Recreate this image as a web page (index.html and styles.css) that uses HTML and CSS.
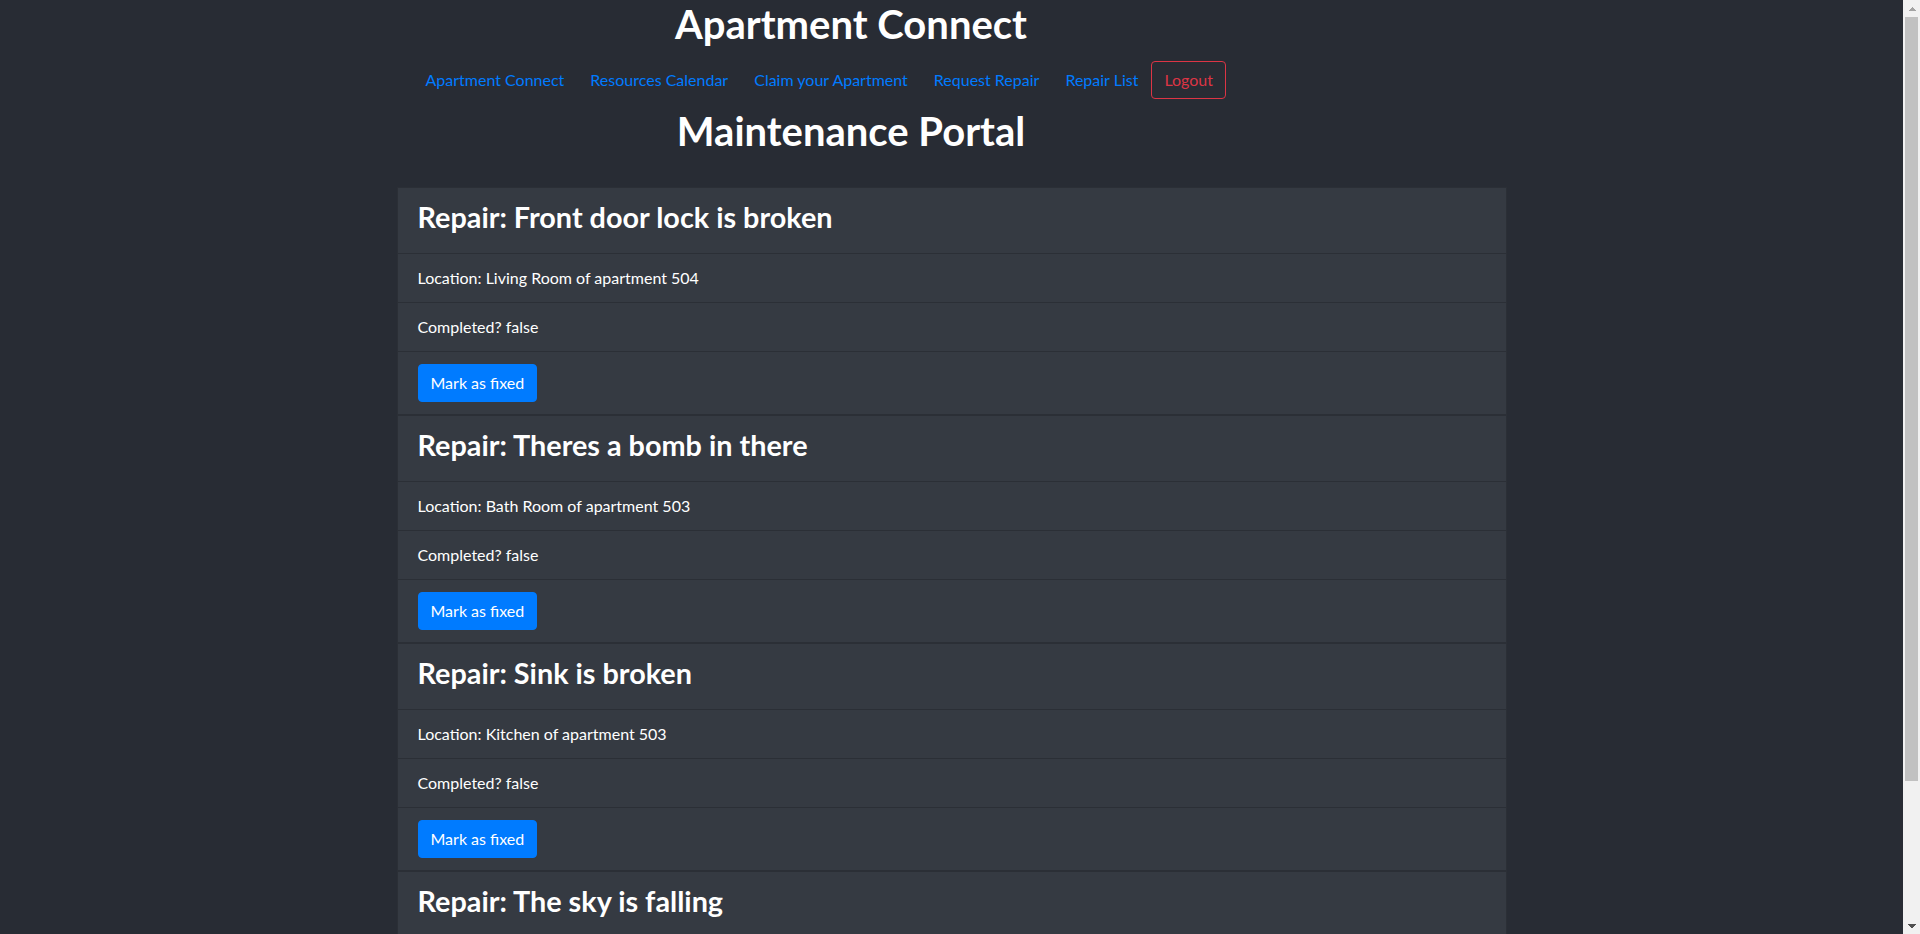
FILE: index.html
```html
<!DOCTYPE html>
<html lang="en">
<head>
<meta charset="utf-8">
<title>Apartment Connect</title>
<link rel="stylesheet" href="styles.css">
</head>
<body>
<div class="page">
  <div class="app">
    <header class="masthead">
      <h1 class="title">Apartment Connect</h1>
      <nav class="nav">
        <a class="nav-link" href="#">Apartment Connect</a>
        <a class="nav-link" href="#">Resources Calendar</a>
        <a class="nav-link" href="#">Claim your Apartment</a>
        <a class="nav-link" href="#">Request Repair</a>
        <a class="nav-link" href="#">Repair List</a>
        <button class="btn btn-outline-danger" type="button">Logout</button>
      </nav>
      <h1 class="title title-page">Maintenance Portal</h1>
    </header>

    <main class="repairs">
      <section class="card">
        <div class="item item-head"><h3>Repair: Front door lock is broken</h3></div>
        <div class="item">Location: Living Room of apartment 504</div>
        <div class="item">Completed? false</div>
        <div class="item item-action"><button class="btn btn-primary" type="button">Mark as fixed</button></div>
      </section>
      <section class="card">
        <div class="item item-head"><h3>Repair: Theres a bomb in there</h3></div>
        <div class="item">Location: Bath Room of apartment 503</div>
        <div class="item">Completed? false</div>
        <div class="item item-action"><button class="btn btn-primary" type="button">Mark as fixed</button></div>
      </section>
      <section class="card">
        <div class="item item-head"><h3>Repair: Sink is broken</h3></div>
        <div class="item">Location: Kitchen of apartment 503</div>
        <div class="item">Completed? false</div>
        <div class="item item-action"><button class="btn btn-primary" type="button">Mark as fixed</button></div>
      </section>
      <section class="card">
        <div class="item item-head"><h3>Repair: The sky is falling</h3></div>
        <div class="item">Location: Living Room of apartment 503</div>
        <div class="item">Completed? false</div>
        <div class="item item-action"><button class="btn btn-primary" type="button">Mark as fixed</button></div>
      </section>
    </main>
  </div>
</div>
<div class="scrollbar" aria-hidden="true">
  <div class="sb-btn sb-up"></div>
  <div class="sb-track"><div class="sb-thumb"></div></div>
  <div class="sb-btn sb-down"></div>
</div>
</body>
</html>
```

FILE: styles.css
```css
html, body {
  margin: 0;
  padding: 0;
}

body {
  display: flex;
  height: 100vh;
  overflow: hidden;
  background-color: #282c34;
  color: #ffffff;
  font-family: "Lato", "Liberation Sans", sans-serif;
  font-size: 16px;
  line-height: 1.5;
}

.page {
  flex: 1;
  min-width: 0;
  overflow: hidden;
}

/* static rendering of the browser's vertical scrollbar */
.scrollbar {
  width: 17px;
  flex: none;
  display: flex;
  flex-direction: column;
  background: #f1f1f1;
}
.sb-btn {
  height: 17px;
  flex: none;
  background-repeat: no-repeat;
  background-position: center;
  background-size: 8px 4px;
}
.sb-up {
  background-image: conic-gradient(from 135deg at 50% 0, #a3a3a3 90deg, transparent 0);
}
.sb-down {
  background-image: conic-gradient(from -45deg at 50% 100%, #505050 90deg, transparent 0);
}
.sb-track {
  flex: 1;
  padding: 0 2px;
}
.sb-thumb {
  height: 764px;
  background: #c1c1c1;
}

.app {
  width: 1110px;
  margin: 0 auto;
  padding: 0 15px;
}

.masthead {
  width: 909px;
}

.title {
  margin: 0 0 5px;
  font-size: 40px;
  font-weight: 700;
  line-height: 48px;
  text-align: center;
}

.title-page {
  margin-bottom: 32px;
}

.nav {
  display: flex;
  align-items: center;
  padding: 8px 0 8px 16px;
}

.nav-link {
  color: #007bff;
  text-decoration: none;
  padding: 0 13px;
  line-height: 24px;
}

.btn {
  font-family: inherit;
  font-size: 16px;
  line-height: 24px;
  padding: 6px 12px;
  border: 1px solid transparent;
  border-radius: 4px;
  cursor: pointer;
}

.btn-outline-danger {
  color: #dc3545;
  background: transparent;
  border-color: #dc3545;
}

.btn-primary {
  color: #ffffff;
  background-color: #007bff;
  border-color: #007bff;
}

.repairs {
  display: flex;
  flex-direction: column;
}

.card {
  background-color: #353a42;
  border: 1px solid rgba(0, 0, 0, 0.18);
}

.item {
  padding: 12px 20px;
  border-bottom: 1px solid rgba(0, 0, 0, 0.18);
}

.item-head {
  padding-top: 13px;
  padding-bottom: 11px;
}

.item-head h3 {
  margin: 0 0 8px;
  font-size: 28.8px;
  font-weight: 700;
  line-height: 33px;
}

.item-action {
  border-bottom: 0;
}
```
